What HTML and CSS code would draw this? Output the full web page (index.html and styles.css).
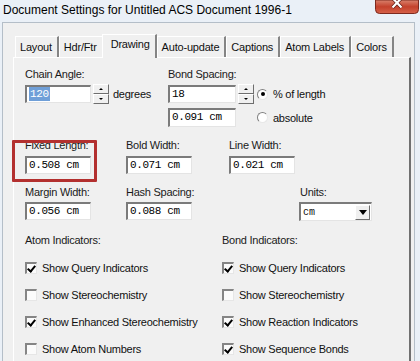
FILE: index.html
```html
<!DOCTYPE html>
<html lang="en">
<head>
    <meta charset="UTF-8">
    <title>Document Settings</title>
    <link rel="stylesheet" href="styles.css">
</head>
<body>
<div class="window">
    <div class="titlebar">
        <span class="title">Document Settings for Untitled ACS Document 1996-1</span>
        <svg class="close" width="44" height="14" viewBox="0 0 44 14">
            <defs>
                <linearGradient id="red" x1="0" y1="0" x2="0" y2="1">
                    <stop offset="0" stop-color="#d9826d"/>
                    <stop offset="0.5" stop-color="#c4412c"/>
                    <stop offset="1" stop-color="#d6624a"/>
                </linearGradient>
            </defs>
            <path d="M0.5 0 V9.5 Q0.5 13.5 4.5 13.5 H39.5 Q43.5 13.5 43.5 9.5 V0 Z" fill="url(#red)" stroke="#7d2a1f"/>
            <path d="M17.5 -2 L26.5 7.5 M26.5 -2 L17.5 7.5" stroke="#5a1a12" stroke-width="3.4"/>
            <path d="M17.5 -2 L26.5 7.5 M26.5 -2 L17.5 7.5" stroke="#fff" stroke-width="2.2"/>
        </svg>
    </div>

    <div class="client">
        <div class="tabs">
            <div class="tab">Layout</div>
            <div class="tab">Hdr/Ftr</div>
            <div class="tab active">Drawing</div>
            <div class="tab">Auto-update</div>
            <div class="tab">Captions</div>
            <div class="tab">Atom Labels</div>
            <div class="tab">Colors</div>
        </div>

        <div class="panel">
            <div class="row-spacing">
                <div class="chain">
                    <div class="label">Chain Angle:</div>
                    <div class="line">
                        <div class="box w66"><span class="sel">120</span></div>
                        <div class="spin"><span class="up"></span><span class="down"></span></div>
                        <span class="unit">degrees</span>
                    </div>
                </div>
                <div class="bond">
                    <div class="label">Bond Spacing:</div>
                    <div class="bond-grid">
                        <div class="box">18</div>
                        <div class="spin"><span class="up"></span><span class="down"></span></div>
                        <div class="radio on"><span class="dot"></span>% of length</div>
                        <div class="box tall">0.091 cm</div>
                        <span></span>
                        <div class="radio"><span class="dot"></span>absolute</div>
                    </div>
                </div>
            </div>

            <div class="row-fields">
                <div class="field">
                    <div class="label">Fixed Length:</div>
                    <div class="box w66">0.508 cm</div>
                </div>
                <div class="field">
                    <div class="label">Bold Width:</div>
                    <div class="box w66">0.071 cm</div>
                </div>
                <div class="field">
                    <div class="label">Line Width:</div>
                    <div class="box w66">0.021 cm</div>
                </div>
            </div>

            <div class="row-fields second">
                <div class="field">
                    <div class="label">Margin Width:</div>
                    <div class="box w66">0.056 cm</div>
                </div>
                <div class="field">
                    <div class="label">Hash Spacing:</div>
                    <div class="box w66">0.088 cm</div>
                </div>
                <div class="field units">
                    <div class="label">Units:</div>
                    <div class="select">
                        <span>cm</span>
                        <span class="drop"></span>
                    </div>
                </div>
            </div>

            <div class="indicators">
                <div class="group atom">
                    <div class="label">Atom Indicators:</div>
                    <ul class="checks">
                        <li class="on"><span class="check"></span>Show Query Indicators</li>
                        <li><span class="check"></span>Show Stereochemistry</li>
                        <li class="on"><span class="check"></span>Show Enhanced Stereochemistry</li>
                        <li><span class="check"></span>Show Atom Numbers</li>
                    </ul>
                </div>
                <div class="group">
                    <div class="label">Bond Indicators:</div>
                    <ul class="checks">
                        <li class="on"><span class="check"></span>Show Query Indicators</li>
                        <li><span class="check"></span>Show Stereochemistry</li>
                        <li class="on"><span class="check"></span>Show Reaction Indicators</li>
                        <li class="on"><span class="check"></span>Show Sequence Bonds</li>
                    </ul>
                </div>
            </div>
        </div>
    </div>

    <div class="highlight"></div>
</div>
</body>
</html>
```

FILE: styles.css
```css
body {
    margin: 0;
    font-family: 'Liberation Sans', Arial, sans-serif;
    color: #111;
}
.window {
    position: relative;
    width: 420px;
    height: 361px;
    overflow: hidden;
    background: #eaf0f7;
}
.titlebar {
    height: 22px;
    display: flex;
    justify-content: space-between;
    align-items: flex-start;
}
.title {
    font-size: 12px;
    line-height: 21px;
    padding-left: 3px;
    color: #000;
}
.close {
    display: block;
    margin-right: 1px;
}
.client {
    margin: 0 5px 0 2px;
    height: 339px;
    box-sizing: border-box;
    border: 1px solid #b4bec8;
    border-bottom: none;
    background: #f0f0f0;
    overflow: hidden;
}
.tabs {
    display: flex;
    align-items: flex-end;
    height: 21px;
    margin-top: 13px;
    padding-left: 12px;
    font-size: 11px;
    letter-spacing: -0.2px;
}
.tab {
    height: 20px;
    line-height: 20px;
    padding: 0 5px 0 4px;
    border-left: 1px solid #fff;
    border-top: 1px solid #fff;
    border-right: 2px solid #858585;
    background: #f0f0f0;
}
.tab.active {
    height: 23px;
    line-height: 19px;
    margin-left: -2px;
    padding: 0 5px 0 8px;
    margin-bottom: -1px;
}
.panel {
    margin: 0 3px 0 10px;
    height: 300px;
    border-top: 1px solid #fff;
    border-left: 1px solid #fff;
    border-right: 2px solid #707070;
    padding: 9px 0 0 11px;
    font-size: 11px;
    letter-spacing: -0.25px;
}
.label {
    height: 14px;
    line-height: 14px;
    color: #1a1a1a;
}
.box {
    box-sizing: border-box;
    width: 68px;
    height: 18px;
    padding-left: 2px;
    border-style: solid;
    border-width: 2px 1px 1px 2px;
    border-color: #7b7b7b #e4e4e4 #e4e4e4 #7b7b7b;
    background: #fff;
    font-family: 'Liberation Mono', monospace;
    font-size: 11px;
    line-height: 15px;
    letter-spacing: -0.4px;
    color: #000;
}
.box.w66 {
    width: 66px;
}
.box.tall {
    height: 19px;
}
.sel {
    background: #6f9fd8;
    color: #fff;
    padding: 1px 1px;
}

/* spacing row */
.row-spacing {
    display: flex;
}
.chain {
    width: 143px;
}
.chain .label, .bond .label {
    margin-bottom: 3px;
}
.line {
    display: flex;
    align-items: center;
}
.spin {
    box-sizing: border-box;
    width: 16px;
    height: 20px;
    margin-left: 2px;
    display: flex;
    flex-direction: column;
}
.spin span {
    position: relative;
    flex: 1;
    background: #f0f0f0;
    border: 1px solid;
    border-color: #fff #6e6e6e #6e6e6e #fff;
}
.spin span::after {
    content: "";
    position: absolute;
    left: 5px;
    top: 3px;
    border-left: 2px solid transparent;
    border-right: 2px solid transparent;
}
.spin .up::after {
    border-bottom: 2px solid #000;
}
.spin .down::after {
    border-top: 2px solid #000;
}
.unit {
    margin-left: 4px;
    margin-top: -1px;
}
.bond-grid {
    display: grid;
    grid-template-columns: 68px 17px auto;
    row-gap: 4px;
    align-items: center;
}
.bond-grid .spin {
    margin-left: 2px;
}
.radio {
    display: flex;
    align-items: center;
    margin-left: 4px;
}
.dot {
    box-sizing: border-box;
    width: 11px;
    height: 11px;
    margin-right: 5px;
    border-radius: 50%;
    border: 1px solid;
    border-color: #808080 #e8e8e8 #e8e8e8 #808080;
    background: #fff;
    display: flex;
    align-items: center;
    justify-content: center;
}
.radio.on .dot::after {
    content: "";
    width: 4px;
    height: 4px;
    border-radius: 50%;
    background: #000;
}

/* length / width rows */
.row-fields {
    display: grid;
    grid-template-columns: 101px 103px 1fr;
    margin-top: 11px;
}
.field .label {
    margin-bottom: 4px;
}
.row-fields.second .field .label {
    margin-bottom: 3px;
}
.units {
    margin-left: 70px;
}
.units .label {
    padding-left: 1px;
}
.select {
    box-sizing: border-box;
    width: 73px;
    height: 19px;
    display: flex;
    align-items: center;
    justify-content: space-between;
    border-style: solid;
    border-width: 2px 1px 1px 2px;
    border-color: #7b7b7b #e4e4e4 #e4e4e4 #7b7b7b;
    background: #fff;
    font-family: 'Liberation Mono', monospace;
    font-size: 10px;
    letter-spacing: 0;
    padding-left: 2px;
}
.drop {
    box-sizing: border-box;
    width: 15px;
    height: 15px;
    margin-right: 1px;
    background: #f0f0f0;
    border: 1px solid;
    border-color: #fff #6e6e6e #6e6e6e #fff;
    display: flex;
    align-items: center;
    justify-content: center;
}
.drop::after {
    content: "";
    border-left: 4px solid transparent;
    border-right: 4px solid transparent;
    border-top: 5px solid #000;
}

/* indicator checkboxes */
.indicators {
    display: flex;
    margin-top: 12px;
}
.group.atom {
    width: 197px;
}
.checks {
    list-style: none;
    margin: 7px 0 0;
    padding: 0;
}
.checks li {
    height: 27px;
    display: flex;
    align-items: center;
}
.check {
    box-sizing: border-box;
    width: 12px;
    height: 12px;
    margin-right: 5px;
    border-style: solid;
    border-width: 2px 1px 1px 2px;
    border-color: #858585 #e6e6e6 #e6e6e6 #858585;
    background: #fbfbfb;
    position: relative;
}
.checks li.on .check::after {
    content: "";
    position: absolute;
    left: 2px;
    top: 0;
    width: 3px;
    height: 6px;
    border-right: 2px solid #000;
    border-bottom: 2px solid #000;
    transform: rotate(40deg);
}

.highlight {
    position: absolute;
    left: 12px;
    top: 140px;
    width: 85px;
    height: 42px;
    box-sizing: border-box;
    border: 3px solid #b3302f;
    border-radius: 1px;
}
```
